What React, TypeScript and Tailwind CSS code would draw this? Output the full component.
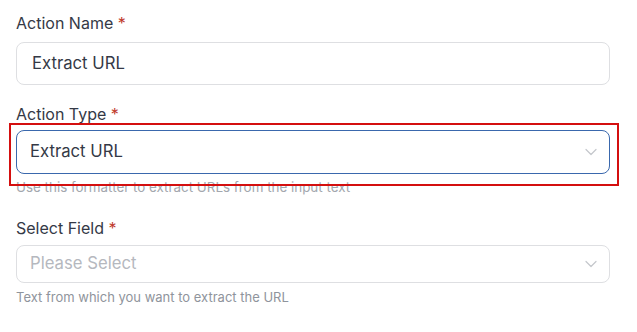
import React from "react";

function Chevron() {
  return (
    <svg width="12" height="8" viewBox="0 0 12 8" fill="none" className="shrink-0">
      <path d="M1 1.5L6 6.5L11 1.5" stroke="#c4c7cc" strokeWidth="1.2" strokeLinecap="round" strokeLinejoin="round" />
    </svg>
  );
}

function Label({ children }: { children: React.ReactNode }) {
  return (
    <div className="text-[16px] leading-[20px] text-[#343946]">
      {children} <span className="text-[#c0392b]">*</span>
    </div>
  );
}

export default function App() {
  return (
    <div
      className="w-[637px] h-[332px] bg-white px-4 pt-[13px]"
      style={{ fontFamily: "Inter, 'Noto Sans', sans-serif" }}
    >
      <Label>Action Name</Label>
      <div className="mt-[9px] h-[43px] w-[594px] rounded-[8px] border border-[#dedfe2] flex items-center pl-[15px] text-[16.7px] text-[#343946]">
        Extract URL
      </div>

      <div className="mt-[19px]">
        <Label>Action Type</Label>
      </div>
      <div className="relative mt-[6px]">
        <div className="h-[44px] w-[594px] rounded-[8px] border border-[#3a68ad] flex items-center justify-between pl-[13px] pr-[12px] text-[16.7px] text-[#343946]">
          <span>Extract URL</span>
          <Chevron />
        </div>
        <div className="absolute left-[-7px] top-[-7px] w-[610px] h-[63px] border-2 border-[#d40f0f] pointer-events-none" />
      </div>
      <div className="mt-[5px] text-[13.4px] leading-[16px] text-[#a3a7ae]">
        Use this formatter to extract URLs from the input text
      </div>

      <div className="mt-[23px]">
        <Label>Select Field</Label>
      </div>
      <div className="mt-[7px] h-[38px] w-[594px] rounded-[8px] border border-[#dedfe2] flex items-center justify-between pl-[13px] pr-[12px] text-[16.7px] text-[#b5b8be]">
        <span>Please Select</span>
        <Chevron />
      </div>
      <div className="mt-[6px] text-[13px] leading-[16px] text-[#8f949c]">
        Text from which you want to extract the URL
      </div>
    </div>
  );
}
